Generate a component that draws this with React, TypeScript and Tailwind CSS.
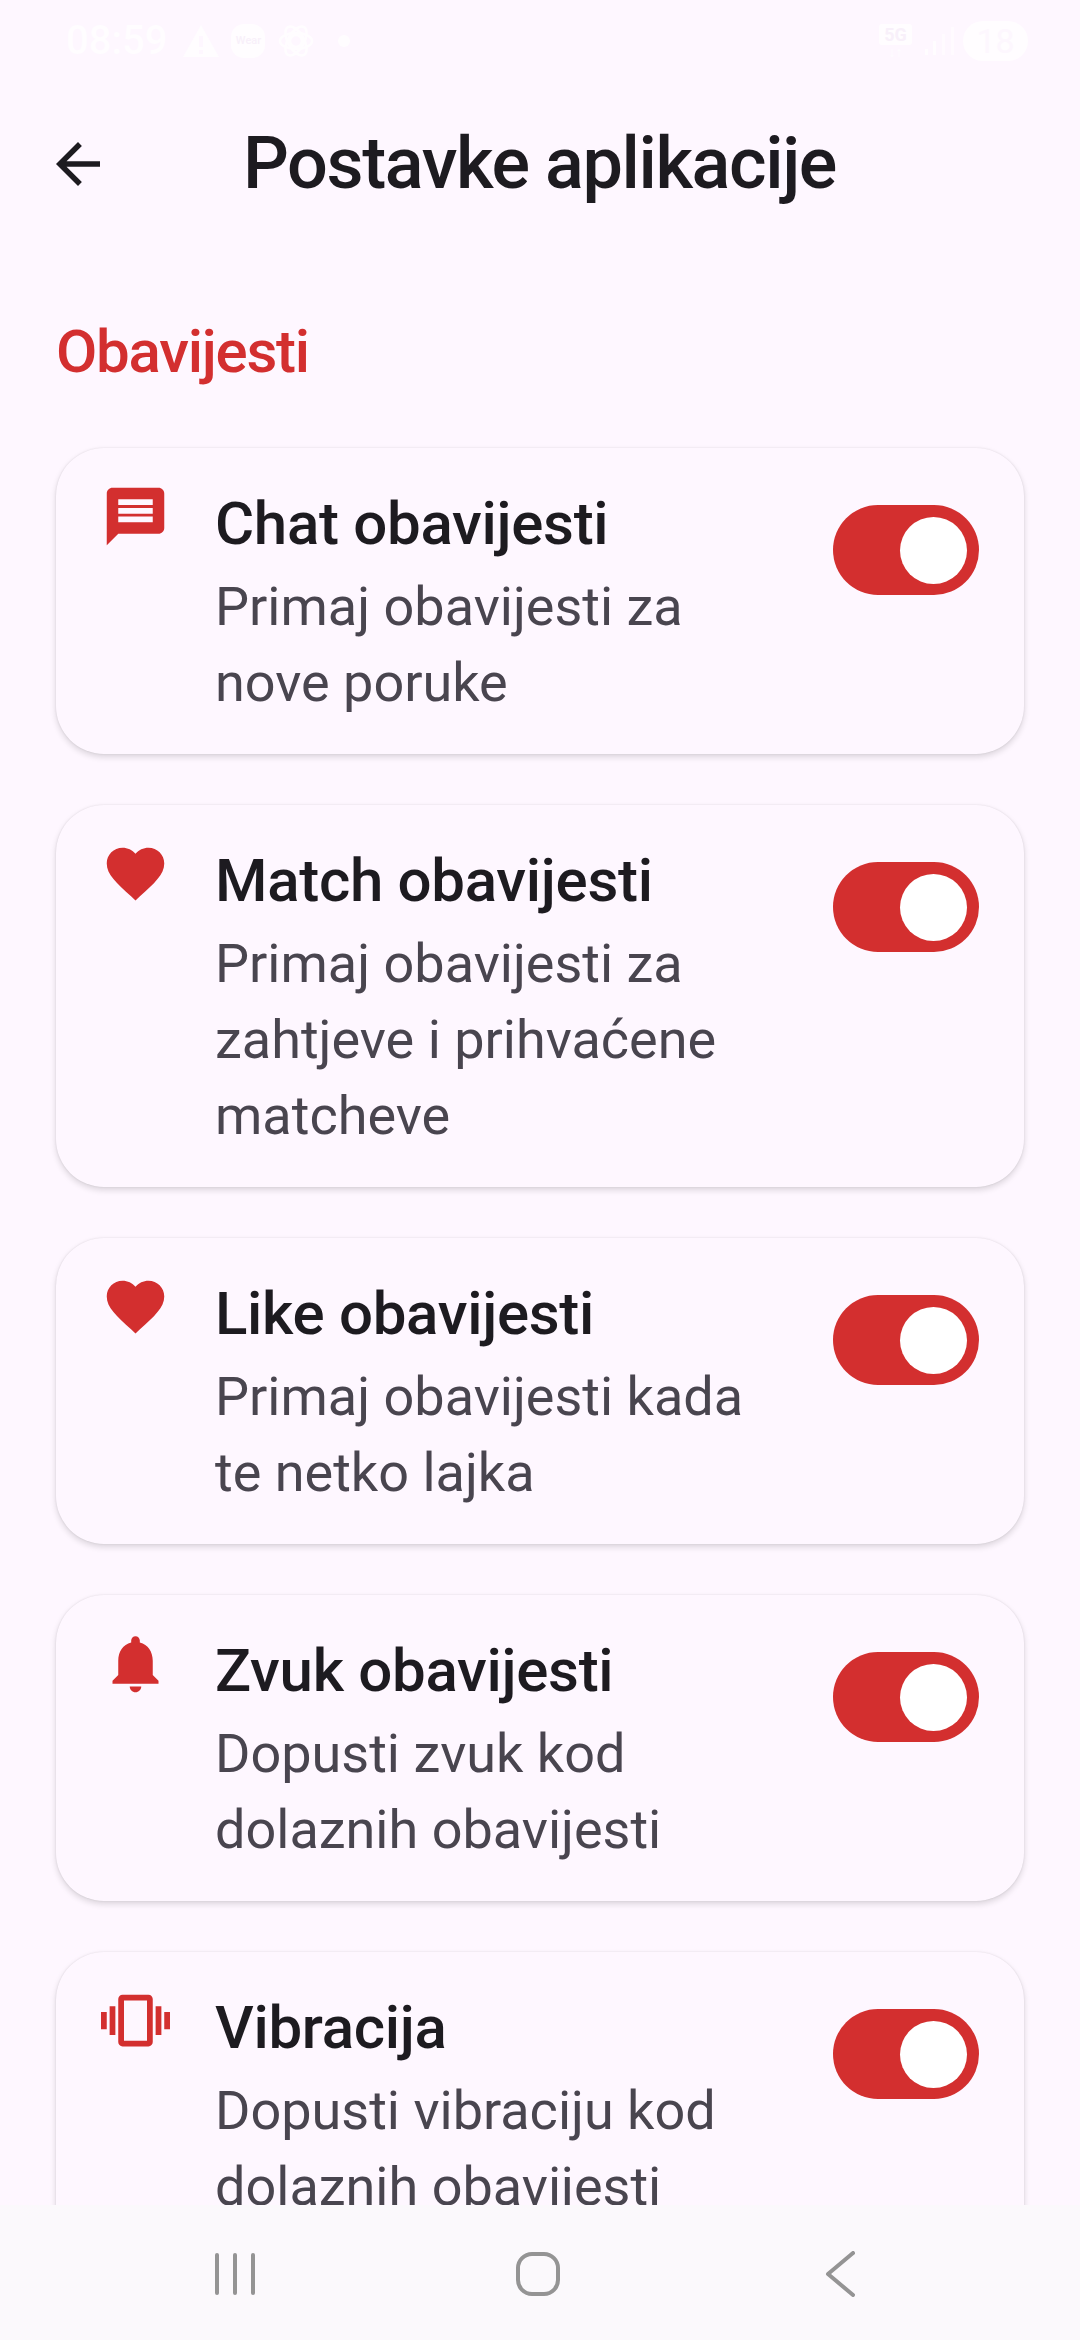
const items = [
  { title: "Chat obavijesti", desc: "Primaj obavijesti za nove poruke", icon: "M20 2H4c-1.1 0-1.99.9-1.99 2L2 22l4-4h14c1.1 0 2-.9 2-2V4c0-1.1-.9-2-2-2zm-2 12H6v-2h12v2zm0-3H6V9h12v2zm0-3H6V6h12v2z" },
  { title: "Match obavijesti", desc: "Primaj obavijesti za zahtjeve i prihvaćene matcheve", icon: "M12 21.35l-1.45-1.32C5.4 15.36 2 12.28 2 8.5 2 5.42 4.42 3 7.5 3c1.74 0 3.41.81 4.5 2.09C13.09 3.81 14.76 3 16.5 3 19.58 3 22 5.42 22 8.5c0 3.78-3.4 6.86-8.55 11.54L12 21.35z" },
  { title: "Like obavijesti", desc: "Primaj obavijesti kada te netko lajka", icon: "M12 21.35l-1.45-1.32C5.4 15.36 2 12.28 2 8.5 2 5.42 4.42 3 7.5 3c1.74 0 3.41.81 4.5 2.09C13.09 3.81 14.76 3 16.5 3 19.58 3 22 5.42 22 8.5c0 3.78-3.4 6.86-8.55 11.54L12 21.35z" },
  { title: "Zvuk obavijesti", desc: "Dopusti zvuk kod dolaznih obavijesti", icon: "M12 22c1.1 0 2-.9 2-2h-4c0 1.1.89 2 2 2zm6-6v-5c0-3.07-1.64-5.64-4.5-6.32V4c0-.83-.67-1.5-1.5-1.5s-1.5.67-1.5 1.5v.68C7.63 5.36 6 7.92 6 11v5l-2 2v1h16v-1l-2-2z" },
  { title: "Vibracija", desc: "Dopusti vibraciju kod dolaznih obavijesti", icon: "M0 15h2V9H0v6zm3 2h2V7H3v10zm19-8v6h2V9h-2zm-3 8h2V7h-2v10zM16.5 3h-9C6.67 3 6 3.67 6 4.5v15c0 .83.67 1.5 1.5 1.5h9c.83 0 1.5-.67 1.5-1.5v-15c0-.83-.67-1.5-1.5-1.5zM16 19H8V5h8v14z" },
];

function Switch() {
  return (
    <div className="mt-[23px] ml-[48px] flex h-[90px] w-[146px] shrink-0 items-center justify-end rounded-full bg-[#d32f2f] pr-[12px]">
      <div className="h-[67px] w-[67px] rounded-full bg-white" />
    </div>
  );
}

function Card({ title, desc, icon }: { title: string; desc: string; icon: string }) {
  return (
    <div className="mb-[51px] flex rounded-[48px] bg-[#fef7ff] pt-[34px] pr-[45px] pb-[33px] pl-[45px] shadow-[0_3px_6px_rgba(0,0,0,0.14),0_0_2px_rgba(0,0,0,0.1)]">
      <svg viewBox="0 0 24 24" className="h-[69px] w-[69px] shrink-0 fill-[#d32f2f]">
        <path d={icon} />
      </svg>
      <div className="ml-[45px] min-w-0 flex-1">
        <div className="mb-[3px] text-[60px] leading-[84px] font-medium tracking-[-0.3px] text-[#1d1b20]">{title}</div>
        <div className="text-[54px] leading-[76px] text-[#49454f]">{desc}</div>
      </div>
      <Switch />
    </div>
  );
}

export default function App() {
  return (
    <div className="flex h-[2340px] w-[1080px] flex-col overflow-hidden bg-[#fef7ff] font-['Roboto',sans-serif]">
      {/* status bar */}
      <div className="flex h-[84px] shrink-0 items-start justify-between pt-[21px] pr-[52px] pl-[66px] text-[#fffdff]">
        <div className="flex h-[40px] items-center">
          <span className="text-[40px] leading-[40px] font-medium">08:59</span>
          <svg viewBox="0 0 36 32" className="ml-[16px] h-[32px] w-[36px] fill-[#fffdff]">
            <path d="M18 0L36 32H0zM16 11v11h4V11zM16 25v4h4v-4z" fillRule="evenodd" />
          </svg>
          <div className="ml-[12px] flex h-[34px] w-[34px] items-center justify-center rounded-[13px] bg-[#fffdff] text-[11px] font-medium text-[#f8f0fa]">Wear</div>
          <svg viewBox="0 0 36 36" className="ml-[13px] h-[36px] w-[36px] fill-none stroke-[#fffdff] stroke-[2.5]">
            <circle cx="18" cy="18" r="6" />
            <ellipse cx="18" cy="18" rx="16" ry="8" />
            <ellipse cx="18" cy="18" rx="16" ry="8" transform="rotate(60 18 18)" />
            <ellipse cx="18" cy="18" rx="16" ry="8" transform="rotate(120 18 18)" />
          </svg>
          <div className="ml-[24px] h-[12px] w-[12px] rounded-full bg-[#fffdff]" />
        </div>
        <div className="flex h-[40px] items-center">
          <div className="flex flex-col items-center">
            <div className="h-[21px] w-[33px] rounded-[3px] bg-[#fffdff] text-center text-[18px] leading-[21px] font-bold text-[#f8f0fa]">5G</div>
            <div className="text-[14px] leading-[14px]">↓↑</div>
          </div>
          <svg viewBox="0 0 29 28" className="ml-[13px] h-[28px] w-[29px] fill-[#fffdff]">
            <rect x="0" y="22" width="3" height="6" />
            <rect x="8" y="14" width="3" height="14" />
            <rect x="17" y="7" width="3" height="21" opacity="0.6" />
            <rect x="26" y="0" width="3" height="28" opacity="0.6" />
          </svg>
          <div className="ml-[9px] flex h-[40px] w-[65px] items-center justify-center rounded-full bg-[#fffdff] text-[34px] text-[#fdf7fe]">18</div>
        </div>
      </div>

      {/* header */}
      <div className="flex h-[160px] shrink-0 items-center pl-[45px]">
        <svg viewBox="0 0 24 24" className="h-[66px] w-[66px] fill-[#1d1b20]">
          <path d="M20 11H7.83l5.59-5.59L12 4l-8 8 8 8 1.41-1.41L7.83 13H20v-2z" />
        </svg>
        <h1 className="ml-[132px] text-[72px] leading-[80px] font-medium tracking-[-1.4px] text-[#1d1b20]">Postavke aplikacije</h1>
      </div>

      {/* content */}
      <div className="min-h-0 flex-1 overflow-hidden px-[56px]">
        <div className="mt-[76px] mb-[64px] text-[60px] leading-[64px] font-medium tracking-[-1.26px] text-[#d32f2f]">Obavijesti</div>
        {items.map((it) => (
          <Card key={it.title} {...it} />
        ))}
      </div>

      {/* nav bar */}
      <div className="flex h-[135px] shrink-0 items-center justify-between bg-[#fbf9fc] pt-[3px] pr-[225px] pl-[215px]">
        <div className="flex h-[42px] w-[40px] justify-between">
          <div className="h-full w-[4px] rounded-full bg-[#949494]" />
          <div className="h-full w-[4px] rounded-full bg-[#949494]" />
          <div className="h-full w-[4px] rounded-full bg-[#949494]" />
        </div>
        <div className="mr-[4px] h-[44px] w-[44px] rounded-[16px] border-[4px] border-[#949494]" />
        <svg viewBox="0 0 30 46" className="h-[46px] w-[30px] fill-none stroke-[#949494] stroke-[4]">
          <path d="M28 2L3 23l25 21" strokeLinecap="round" strokeLinejoin="round" />
        </svg>
      </div>
    </div>
  );
}
